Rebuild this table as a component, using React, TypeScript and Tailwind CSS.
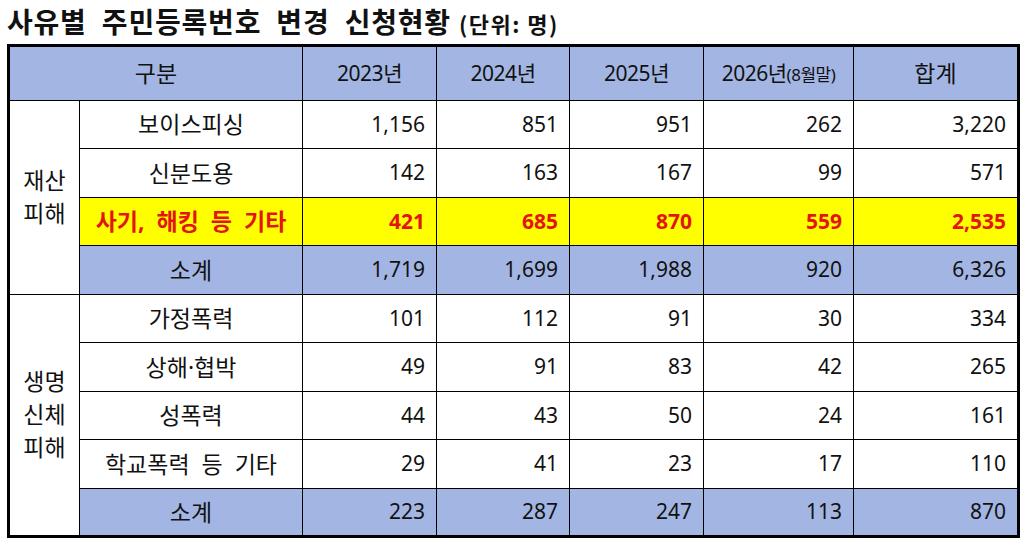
import React from "react";

type Row = {
  label: string;
  values: string[];
  kind?: "normal" | "highlight" | "subtotal";
};

const years = ["2023년", "2024년", "2025년"];

const property: Row[] = [
  { label: "보이스피싱", values: ["1,156", "851", "951", "262", "3,220"] },
  { label: "신분도용", values: ["142", "163", "167", "99", "571"] },
  { label: "사기, 해킹 등 기타", values: ["421", "685", "870", "559", "2,535"], kind: "highlight" },
  { label: "소계", values: ["1,719", "1,699", "1,988", "920", "6,326"], kind: "subtotal" },
];

const body: Row[] = [
  { label: "가정폭력", values: ["101", "112", "91", "30", "334"] },
  { label: "상해·협박", values: ["49", "91", "83", "42", "265"] },
  { label: "성폭력", values: ["44", "43", "50", "24", "161"] },
  { label: "학교폭력 등 기타", values: ["29", "41", "23", "17", "110"] },
  { label: "소계", values: ["223", "287", "247", "113", "870"], kind: "subtotal" },
];

const rowBg = (kind?: Row["kind"]) =>
  kind === "highlight" ? "bg-[#ffff00]" : kind === "subtotal" ? "bg-[#a3b6e3]" : "bg-white";

const DataRow = ({ row, group }: { row: Row; group?: React.ReactNode }) => {
  const red = row.kind === "highlight";
  return (
    <tr className="h-[48.5px]">
      {group}
      <td
        className={`border border-black text-center whitespace-pre text-[23px] ${rowBg(row.kind)} ${
          red ? "font-bold text-[#e3150f]" : ""
        }`}
        style={{ wordSpacing: "6px" }}
      >
        {row.label}
      </td>
      {row.values.map((v, i) => (
        <td
          key={i}
          className={`border border-black text-right pr-[11px] ${rowBg(row.kind)} ${
            red ? "font-bold text-[#e3150f]" : ""
          }`}
        >
          {v}
        </td>
      ))}
    </tr>
  );
};

const GroupCell = ({ lines, span }: { lines: string[]; span: number }) => (
  <td rowSpan={span} className="border border-black bg-white text-center align-middle text-[23px] leading-[33px]">
    {lines.map((l) => (
      <div key={l}>{l}</div>
    ))}
  </td>
);

export default function App() {
  return (
    <div
      className="w-[1026px] h-[544px] bg-white text-[#111]"
      style={{ fontFamily: '"Noto Sans", "Noto Sans CJK KR", sans-serif' }}
    >
      <div
        className="pl-[7px] h-[44px] pt-[2px] leading-[38px] whitespace-nowrap"
        style={{ fontFamily: '"Noto Sans CJK KR", sans-serif' }}
      >
        <span className="text-[28px] font-bold tracking-[0.8px]" style={{ wordSpacing: "8px" }}>
          사유별 주민등록번호 변경 신청현황
        </span>
        <span className="text-[22px] font-bold ml-[8px] tracking-[1.5px]">(단위: 명)</span>
      </div>

      <table className="ml-[7px] border-collapse border-[3px] border-black table-fixed w-[1010px] text-[21px]">
        <colgroup>
          <col className="w-[71px]" />
          <col className="w-[223px]" />
          <col className="w-[134px]" />
          <col className="w-[133px]" />
          <col className="w-[134px]" />
          <col className="w-[150px]" />
          <col className="w-[165px]" />
        </colgroup>
        <thead>
          <tr className="h-[54.5px] bg-[#a3b6e3]">
            <th colSpan={2} className="border border-black font-normal text-center text-[23px]">
              구분
            </th>
            {years.map((y) => (
              <th key={y} className="border border-black font-normal text-center tracking-[-0.5px]">
                {y}
              </th>
            ))}
            <th className="border border-black font-normal text-center tracking-[-0.5px]">
              2026년<span className="text-[17px]">(8월말)</span>
            </th>
            <th className="border border-black font-normal text-center text-[23px]">합계</th>
          </tr>
        </thead>
        <tbody>
          {property.map((r, i) => (
            <DataRow
              key={r.label + i}
              row={r}
              group={i === 0 ? <GroupCell lines={["재산", "피해"]} span={property.length} /> : undefined}
            />
          ))}
          {body.map((r, i) => (
            <DataRow
              key={r.label + i}
              row={r}
              group={i === 0 ? <GroupCell lines={["생명", "신체", "피해"]} span={body.length} /> : undefined}
            />
          ))}
        </tbody>
      </table>
    </div>
  );
}
